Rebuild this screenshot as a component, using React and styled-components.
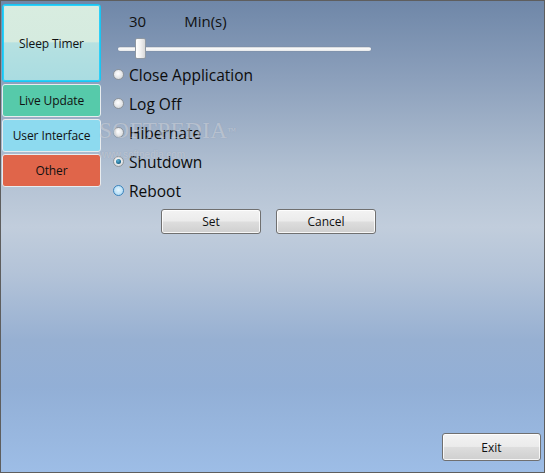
import React from "react";
import styled, { createGlobalStyle } from "styled-components";

const Global = createGlobalStyle`
  html, body { margin: 0; padding: 0; }
  body { font-family: "Open Sans", "Noto Sans", sans-serif; }
`;

const Window = styled.div`
  position: relative;
  box-sizing: border-box;
  width: 545px;
  height: 473px;
  border: 1px solid #5e5e5e;
  background: linear-gradient(
    180deg,
    #6f87a8 0%,
    #8b9fbb 16%,
    #b1c0d2 36%,
    #c1cddc 48%,
    #b3c3d8 58%,
    #97b0d2 72%,
    #92afd6 82%,
    #9dbde6 100%
  );
  display: grid;
  grid-template-columns: 100px 1fr;
  overflow: hidden;
`;

const Nav = styled.nav`
  display: flex;
  flex-direction: column;
  gap: 2px;
  padding: 3px 0 0 1px;
`;

const NavButton = styled.div`
  box-sizing: border-box;
  height: ${(p) => p.$h}px;
  display: flex;
  align-items: center;
  justify-content: center;
  border-radius: 3px;
  border: 1px solid ${(p) => (p.$active ? "#19c6f2" : "#e8ecef")};
  box-shadow: ${(p) => (p.$active ? "inset 0 0 0 1px #2dd0f8" : "none")};
  background: ${(p) => p.$bg};
  font-size: 12px;
  color: #111;
  letter-spacing: -0.1px;
`;

const Content = styled.div`
  display: flex;
  flex-direction: column;
  padding: 10px 3px 11px 12px;
`;

const TimeRow = styled.div`
  display: flex;
  align-items: center;
  height: 20px;
  font-size: 15px;
  color: #111;
  padding-left: 16px;
  gap: 38px;
`;

const SliderWrap = styled.div`
  position: relative;
  width: 253px;
  height: 22px;
  margin: 7px 0 0 5px;
`;

const Track = styled.div`
  position: absolute;
  left: 0;
  right: 0;
  top: 9px;
  height: 4px;
  border-radius: 2px;
  background: linear-gradient(180deg, #c9ced3 0%, #fbfbfb 40%, #e6e8ea 100%);
  box-shadow: 0 0 0 0.5px rgba(120, 130, 140, 0.35);
`;

const Thumb = styled.div`
  position: absolute;
  top: 0;
  left: 17px;
  box-sizing: border-box;
  width: 11px;
  height: 21px;
  border: 1px solid #8f98a2;
  border-radius: 2px;
  background: linear-gradient(90deg, #ffffff 0%, #f1f1f1 50%, #d9d9d9 100%);
`;

const RadioList = styled.div`
  display: flex;
  flex-direction: column;
`;

const RadioRow = styled.label`
  display: flex;
  align-items: center;
  gap: 5px;
  height: 29px;
  font-size: 15.5px;
  color: #0c0c0c;
`;

const RadioDot = styled.span`
  box-sizing: border-box;
  width: 11px;
  height: 11px;
  border-radius: 50%;
  flex: none;
  border: 1px solid ${(p) => (p.$hover ? "#3b84bd" : "#8e949a")};
  background: ${(p) =>
    p.$hover
      ? "radial-gradient(circle at 50% 45%, #e6f5fd 0%, #bfe3f8 55%, #9ccfef 100%)"
      : "radial-gradient(circle at 45% 40%, #ffffff 0%, #e4e6e8 55%, #c7cacd 100%)"};
  display: flex;
  align-items: center;
  justify-content: center;
  &::after {
    content: "";
    display: ${(p) => (p.$checked ? "block" : "none")};
    width: 5px;
    height: 5px;
    border-radius: 50%;
    background: radial-gradient(circle at 40% 35%, #5fb4d8 0%, #1d6c93 60%, #0f4664 100%);
  }
`;

const ActionRow = styled.div`
  display: flex;
  gap: 15px;
  margin: 4px 0 0 48px;
`;

const Button = styled.button`
  box-sizing: border-box;
  width: ${(p) => p.$w || 100}px;
  height: ${(p) => p.$h || 25}px;
  border: 1px solid #707070;
  border-radius: 3px;
  background: linear-gradient(180deg, #f3f3f3 0%, #ebebeb 48%, #dddddd 52%, #cfcfcf 100%);
  box-shadow: inset 0 0 0 1px rgba(255, 255, 255, 0.8);
  font-family: "Open Sans", "Noto Sans", sans-serif;
  font-size: 12px;
  color: #111;
  padding: 0;
`;

const Footer = styled.div`
  margin-top: auto;
  display: flex;
  justify-content: flex-end;
`;

const Watermark = styled.div`
  position: absolute;
  left: 98px;
  top: 118px;
  pointer-events: none;
  font-family: "Liberation Serif", serif;
  color: rgba(255, 255, 255, 0.35);
  text-shadow: 0 0 1px rgba(120, 130, 150, 0.4);
`;

const WmBig = styled.div`
  font-size: 23px;
  letter-spacing: 0.5px;
  line-height: 24px;
  sup { font-size: 9px; vertical-align: top; }
`;

const WmSmall = styled.div`
  font-family: "Liberation Sans", sans-serif;
  font-size: 10px;
  margin-top: 6px;
  color: rgba(255, 255, 255, 0.3);
`;

const options = [
  { label: "Close Application" },
  { label: "Log Off" },
  { label: "Hibernate" },
  { label: "Shutdown", checked: true },
  { label: "Reboot", hover: true },
];

export default function App() {
  return (
    <>
      <Global />
      <Window>
        <Nav>
          <NavButton
            $active
            $h={78}
            $bg="linear-gradient(180deg, #d8ece0 0%, #d5ebdf 48%, #b6e1e1 50%, #a9dce1 100%)"
          >
            Sleep Timer
          </NavButton>
          <NavButton $h={33} $bg="#56caaa">Live Update</NavButton>
          <NavButton $h={33} $bg="#8ddaef">User Interface</NavButton>
          <NavButton $h={33} $bg="#e0654a">Other</NavButton>
        </Nav>
        <Content>
          <TimeRow>
            <span>30</span>
            <span>Min(s)</span>
          </TimeRow>
          <SliderWrap>
            <Track />
            <Thumb />
          </SliderWrap>
          <RadioList>
            {options.map((o) => (
              <RadioRow key={o.label}>
                <RadioDot $checked={o.checked} $hover={o.hover} />
                {o.label}
              </RadioRow>
            ))}
          </RadioList>
          <ActionRow>
            <Button>Set</Button>
            <Button>Cancel</Button>
          </ActionRow>
          <Footer>
            <Button $w={99} $h={28}>Exit</Button>
          </Footer>
        </Content>
        <Watermark>
          <WmBig>
            SOFTPEDIA<sup>™</sup>
          </WmBig>
          <WmSmall>www.softpedia.com</WmSmall>
        </Watermark>
      </Window>
    </>
  );
}
